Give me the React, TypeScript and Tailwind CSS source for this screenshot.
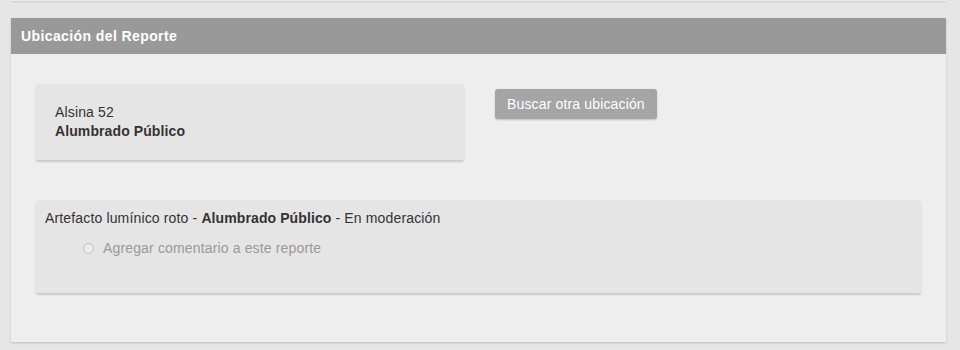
export default function App() {
  return (
    <div
      className="w-[960px] h-[350px] overflow-hidden bg-[#e6e6e6] text-[14px] text-[#333] tracking-[0.15px]"
      style={{ fontFamily: '"Liberation Sans", Arial, sans-serif' }}
    >
      {/* tail of the previous panel */}
      <div className="ml-[11px] w-[935px] h-[1px] bg-[#eeeeee] shadow-[0_1px_2px_rgba(0,0,0,0.18)]" />

      <div className="ml-[11px] mt-[17px] w-[935px] bg-[#eeeeee] shadow-[0_1px_2px_rgba(0,0,0,0.18)]">
        <div className="h-[36px] bg-[#999999] px-[10px] flex items-center">
          <h2 className="text-white font-bold text-[14px] tracking-[0.4px]">Ubicación del Reporte</h2>
        </div>

        <div className="px-[25px] pt-[30px] pb-[49px]">
          <div className="flex items-start">
            <div className="w-[428px] h-[76px] bg-[#e5e5e5] rounded-[2px] shadow-[0_2px_2px_rgba(0,0,0,0.15)] pl-[19px] pt-[19px] leading-[19px]">
              <p>Alsina 52</p>
              <p className="font-bold tracking-[0.1px]">Alumbrado Público</p>
            </div>
            <button className="ml-[31px] mt-[5px] h-[30px] px-[12px] bg-[#a5a5a5] text-white text-[14px] rounded-[3px] shadow-[0_1px_2px_rgba(0,0,0,0.2)]">
              Buscar otra ubicación
            </button>
          </div>

          <div className="mt-[40px] h-[93px] bg-[#e5e5e5] rounded-[2px] shadow-[0_2px_2px_rgba(0,0,0,0.15)] pl-[9px] pt-[9px]">
            <p className="leading-[18px]">
              Artefacto lumínico roto - <span className="font-bold tracking-[0.1px]">Alumbrado Público</span> - En moderación
            </p>
            <label className="mt-[12px] ml-[38px] flex items-center gap-[9px] text-[#999] leading-[18px]">
              <span className="w-[11px] h-[11px] rounded-full border border-[#bdbdbd] bg-[#ececec]" />
              Agregar comentario a este reporte
            </label>
          </div>
        </div>
      </div>
    </div>
  );
}
